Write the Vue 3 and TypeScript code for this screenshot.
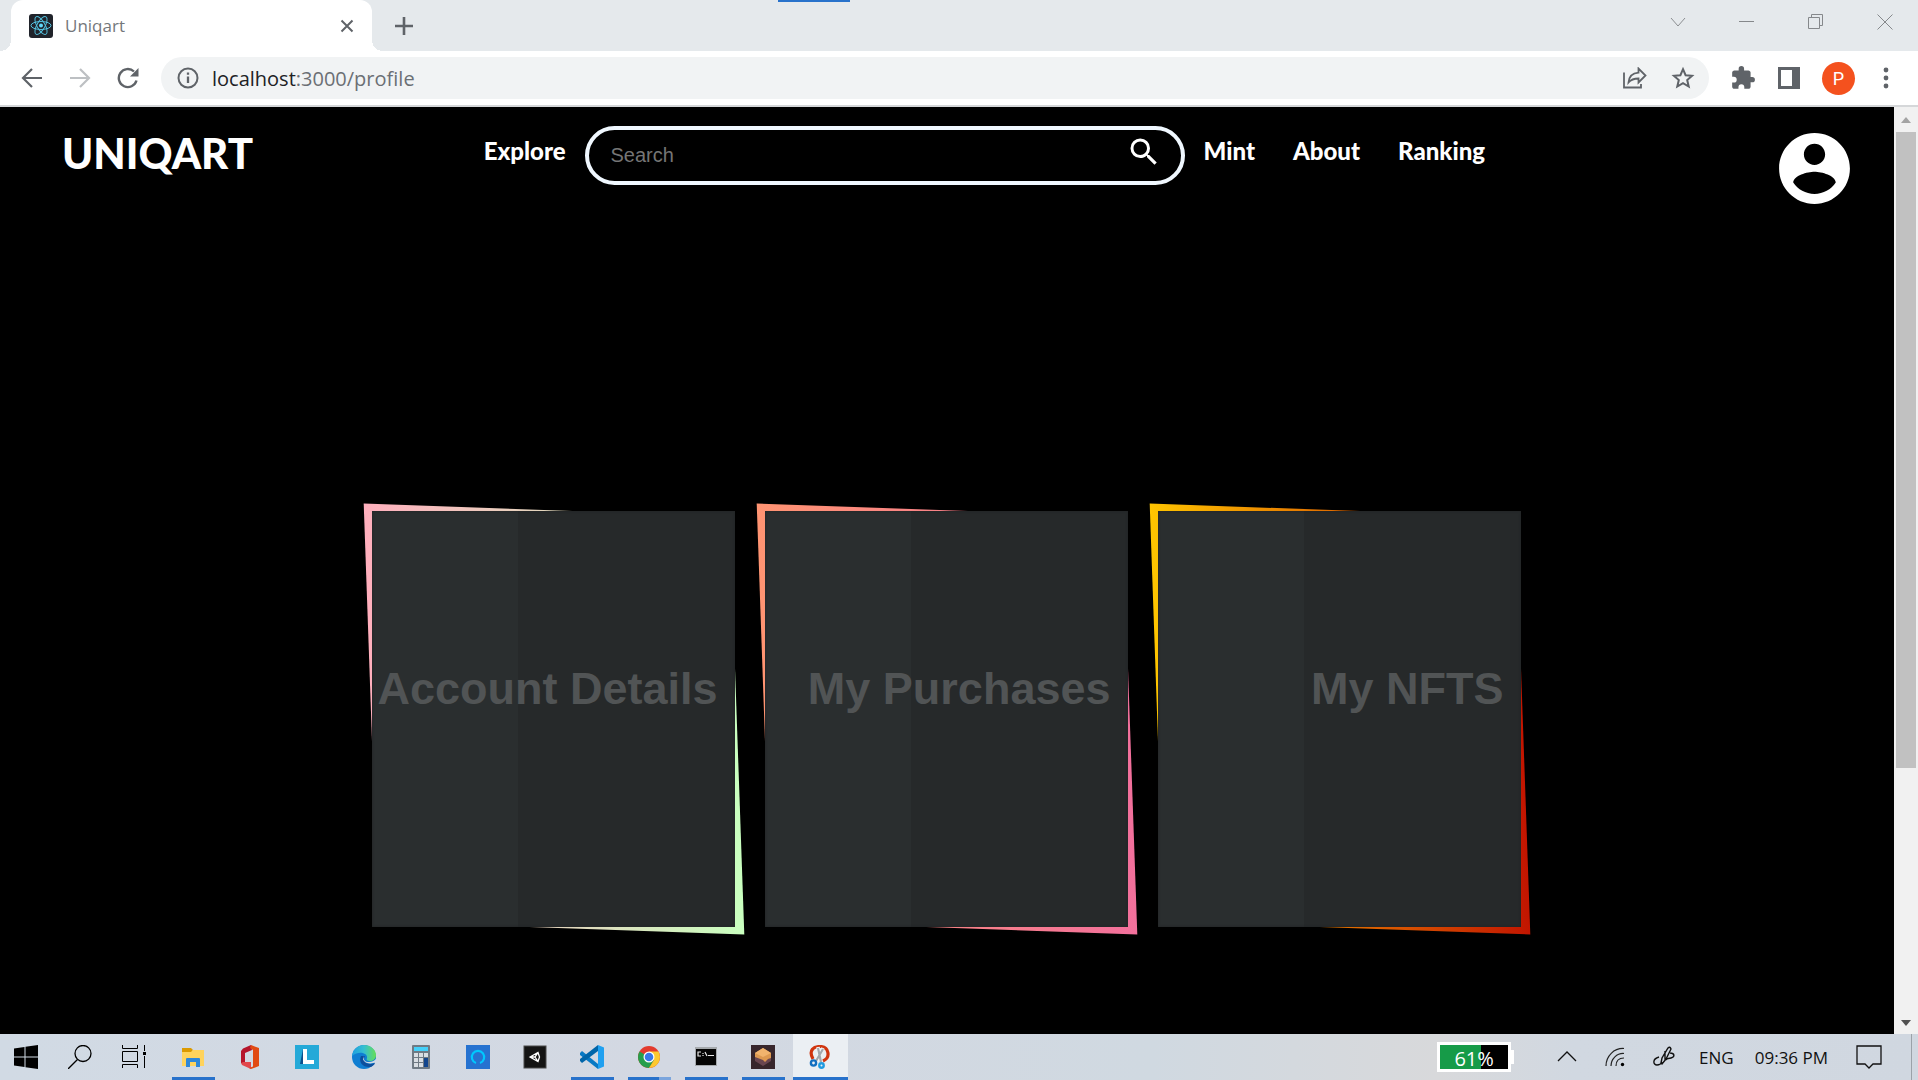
<script setup lang="ts">
interface Card {
  title: string
  from: string
  to: string
}

const cards: Card[] = [
  { title: 'Account Details', from: '#ffafbd', to: '#c9ffbf' },
  { title: 'My Purchases', from: '#ff9472', to: '#f2709c' },
  { title: 'My NFTS', from: '#ffc500', to: '#c21500' },
]

const linksAfterSearch: string[] = ['Mint', 'About', 'Ranking']
</script>

<template>
  <div class="screen">
    <div class="tabstrip">
      <span class="capture-bar"></span>
      <div class="tab">
        <svg class="favicon" viewBox="0 0 24 24" width="24" height="24">
          <rect width="24" height="24" rx="3" fill="#20232a" />
          <g fill="none" stroke="#53c1de" stroke-width="1">
            <ellipse cx="12" cy="11.500" rx="10" ry="4" />
            <ellipse cx="12" cy="11.500" rx="10" ry="4" transform="rotate(60 12 11.500)" />
            <ellipse cx="12" cy="11.500" rx="10" ry="4" transform="rotate(120 12 11.500)" />
          </g>
          <circle cx="12" cy="11.500" r="2" fill="#61dafb" />
        </svg>
        <span class="tab-title">Uniqart</span>
        <button class="bare" aria-label="Close tab">
          <svg width="14" height="14" viewBox="0 0 14 14"><path d="M1.500 1.500l11 11M12.500 1.500l-11 11" stroke="#5f6368" stroke-width="2" /></svg>
        </button>
      </div>
      <button class="bare new-tab" aria-label="New tab">
        <svg width="18" height="18" viewBox="0 0 18 18"><path d="M9 0v18M0 9h18" stroke="#5f6368" stroke-width="2.600" /></svg>
      </button>
      <div class="window-buttons">
        <button class="bare" aria-label="Search tabs">
          <svg width="16" height="16" viewBox="0 0 16 16"><path d="M1 4l7 8 7-8" fill="none" stroke="#8b8e91" /></svg>
        </button>
        <button class="bare" aria-label="Minimize">
          <svg width="16" height="16" viewBox="0 0 16 16"><path d="M0 7.500h15" stroke="#85888b" /></svg>
        </button>
        <button class="bare" aria-label="Restore">
          <svg width="16" height="16" viewBox="0 0 16 16"><path d="M.5 3.500h11v11H.5zM3.500 3.500v-3h11v11h-3" fill="none" stroke="#85888b" /></svg>
        </button>
        <button class="bare" aria-label="Close">
          <svg width="16" height="16" viewBox="0 0 16 16"><path d="M.5.5l15 15M15.500.5l-15 15" stroke="#85888b" /></svg>
        </button>
      </div>
    </div>

    <div class="toolbar">
      <div class="history">
        <button class="bare" aria-label="Back">
          <svg width="22" height="22" viewBox="0 0 22 22"><path d="M21 11H2M11 2l-9 9 9 9" fill="none" stroke="#5f6368" stroke-width="2.200" /></svg>
        </button>
        <button class="bare" aria-label="Forward">
          <svg width="22" height="22" viewBox="0 0 22 22"><path d="M1 11h19M11 2l9 9-9 9" fill="none" stroke="#bdc0c3" stroke-width="2.200" /></svg>
        </button>
        <button class="bare" aria-label="Reload">
          <svg width="22" height="22" viewBox="0 0 22 22"><path d="M19.500 13.500A9 9 0 1 1 17 4.500" fill="none" stroke="#5f6368" stroke-width="2.400" /><path d="M21.500 1v8.500H13z" fill="#5f6368" /></svg>
        </button>
      </div>
      <div class="address">
        <svg width="22" height="22" viewBox="0 0 22 22"><circle cx="11" cy="11" r="9.500" fill="none" stroke="#5f6368" stroke-width="2" /><path d="M11 9.500v6.500M11 5.500v2.300" stroke="#5f6368" stroke-width="2.300" /></svg>
        <span class="url"><span class="host">localhost</span>:3000/profile</span>
        <button class="bare share" aria-label="Share">
          <svg width="24" height="22" viewBox="0 0 24 22"><path d="M1 5.500v15h17V17" fill="none" stroke="#5f6368" stroke-width="1.800" /><path d="M5.500 15.500C6 9.500 10 6 15.500 5.600V1.500l7 7-7 7v-4c-4.500 0-7.500 1-10 4z" fill="none" stroke="#5f6368" stroke-width="1.800" /></svg>
        </button>
        <button class="bare" aria-label="Bookmark this page">
          <svg width="24" height="24" viewBox="0 0 24 24"><path d="M12 3.200l2.600 6 6.500.6-4.900 4.300 1.500 6.400-5.700-3.400-5.700 3.400 1.500-6.400-4.900-4.300 6.500-.6z" fill="none" stroke="#5f6368" stroke-width="2" /></svg>
        </button>
      </div>
      <div class="extensions">
        <button class="bare" aria-label="Extensions">
          <svg width="26" height="26" viewBox="0 0 24 24"><path fill="#5f6368" d="M20.500 11H19V7c0-1.100-.9-2-2-2h-4V3.500a2.500 2.500 0 0 0-5 0V5H4c-1.100 0-2 .9-2 2v3.800h1.500a2.700 2.700 0 0 1 0 5.400H2V20c0 1.100.9 2 2 2h3.800v-1.500a2.700 2.700 0 0 1 5.400 0V22H17c1.100 0 2-.9 2-2v-4h1.500a2.500 2.500 0 0 0 0-5z" /></svg>
        </button>
        <button class="bare" aria-label="Side panel">
          <svg width="22" height="22" viewBox="0 0 22 22"><path fill="#5f6368" fill-rule="evenodd" d="M0 0h22v22H0zM3 3v16h11V3z" /></svg>
        </button>
        <button class="bare avatar">P</button>
        <button class="bare" aria-label="Menu">
          <svg width="6" height="22" viewBox="0 0 6 22"><g fill="#5f6368"><circle cx="3" cy="3" r="2.400" /><circle cx="3" cy="11" r="2.400" /><circle cx="3" cy="19" r="2.400" /></g></svg>
        </button>
      </div>
    </div>

    <div class="viewport">
      <div class="page">
        <header class="site-header">
          <a class="logo" href="#">UNIQART</a>
          <nav class="nav">
            <a href="#">Explore</a>
            <form class="search" @submit.prevent>
              <input type="search" placeholder="Search" aria-label="Search" />
              <button class="bare" aria-label="Submit search">
                <svg width="36" height="36" viewBox="0 0 24 24"><path fill="#fff" d="M15.500 14h-.79l-.28-.27A6.471 6.471 0 0 0 16 9.500 6.500 6.500 0 1 0 9.500 16c1.610 0 3.090-.59 4.230-1.570l.27.28v.79l5 4.990L20.490 19l-4.990-5zm-6 0C7.010 14 5 11.990 5 9.500S7.010 5 9.500 5 14 7.010 14 9.500 11.990 14 9.500 14z" /></svg>
              </button>
            </form>
            <a v-for="link in linksAfterSearch" :key="link" href="#">{{ link }}</a>
          </nav>
          <button class="bare account" aria-label="Account">
            <svg width="85" height="85" viewBox="0 0 24 24"><path fill="#fff" d="M12 2C6.480 2 2 6.480 2 12s4.480 10 10 10 10-4.480 10-10S17.520 2 12 2zm0 3c1.660 0 3 1.340 3 3s-1.340 3-3 3-3-1.340-3-3 1.340-3 3-3zm0 14.200c-2.500 0-4.710-1.280-6-3.220.03-1.990 4-3.080 6-3.080 1.990 0 5.970 1.090 6 3.080-1.290 1.940-3.500 3.220-6 3.220z" /></svg>
          </button>
        </header>
        <main class="cards">
          <a
            v-for="card in cards"
            :key="card.title"
            class="card"
            href="#"
            :style="{ '--from': card.from, '--to': card.to }"
          >
            <span class="panel"><span class="card-title">{{ card.title }}</span></span>
          </a>
        </main>
      </div>
      <div class="scrollbar">
        <svg width="24" height="25" viewBox="0 0 24 25"><path d="M7 16l5-6 5 6z" fill="#a3a3a3" /></svg>
        <div class="track"><div class="thumb"></div></div>
        <svg width="24" height="25" viewBox="0 0 24 25"><path d="M7 11l5 6 5-6z" fill="#505050" /></svg>
      </div>
    </div>

    <footer class="taskbar">
      <div class="system">
        <button class="bare" aria-label="Start">
          <svg width="24" height="24" viewBox="0 0 24 24"><path d="M0 3.500L10.500 2v9.500H0zM11.500 1.800L24 0v11.500H11.500zM0 12.500h10.500V22L0 20.500zM11.500 12.500H24V24l-12.500-1.800z" /></svg>
        </button>
        <button class="bare" aria-label="Search">
          <svg width="24" height="24" viewBox="0 0 24 24"><g fill="none" stroke="#000" stroke-width="1.300"><circle cx="15" cy="8.500" r="8" /><path d="M9.500 14.500L0 24" /></g></svg>
        </button>
        <button class="bare" aria-label="Task view">
          <svg width="24" height="24" viewBox="0 0 24 24"><path d="M.5 0v3.500h15V0M.5 6.500h15v10H.5zM.5 23v-3.500h15V23M22.500 0v6M22.500 11v12" fill="none" stroke="#000" /><path d="M21 7h3v3h-3z" /></svg>
        </button>
      </div>
      <div class="apps">
        <button class="bare app open" aria-label="File Explorer">
          <svg width="24" height="24" viewBox="0 0 24 24"><path d="M1 3h9l2 2-2 3H1z" fill="#dc9a00" /><path d="M1 7h9l2-2h11v16H1z" fill="#ffd35c" /><path d="M5 22v-8q0-1 1-1h12q1 0 1 1v8h-4v-5H9v5z" fill="#2f87d8" /></svg>
        </button>
        <button class="bare app" aria-label="Office">
          <svg width="24" height="24" viewBox="0 0 24 24"><path d="M13 0L5 3.500 3 6v12l4 .5V8l7-3z" fill="#b5152b" /><path d="M3 18l2-1h8v7L4 20z" fill="#e2474c" /><path d="M13 0l8 3v18l-8 3-2-1 4-1.500V5l-3-2z" fill="#e14a12" /></svg>
        </button>
        <button class="bare app" aria-label="Lively">
          <svg width="24" height="24" viewBox="0 0 24 24"><path d="M0 0h24v24H0z" fill="#24a9d8" /><path d="M8 4L5 19h12l1-2h-8z" fill="#0c4f8c" /><path d="M8 4h4v11h7v4H8z" fill="#fff" /></svg>
        </button>
        <button class="bare app" aria-label="Edge">
          <svg width="24" height="24" viewBox="0 0 24 24"><defs><linearGradient id="edgeTop" x1="0" x2="1"><stop offset="0" stop-color="#1d9fe0" /><stop offset=".5" stop-color="#36bfd0" /><stop offset="1" stop-color="#66df55" /></linearGradient></defs><circle cx="12" cy="12" r="12" fill="#0f7ed2" /><path d="M0 11C1 4 6 0 12 0c7 0 12 5 12 10 0 4-3 6-6 6-3 0-4-1-3-3 1-5-8-8-15-2z" fill="url(#edgeTop)" /><path d="M9 11c-3 6 2 12 10 11 2-1 4-3 4-4-5 2-10 1-11-3-.5-2 1-4 1-4z" fill="#0c4f9d" /><path d="M12 11c-1 4 1 6 5 6 3 0 5-1 7-3v3c-6 3-12 1-13-3z" fill="#d3dae4" /></svg>
        </button>
        <button class="bare app" aria-label="Calculator">
          <svg width="24" height="24" viewBox="0 0 24 24"><rect x="3" width="18" height="24" rx="1" fill="#6f7a84" /><path d="M5 2h14v4H5z" fill="#45d0fa" /><path d="M5 8h4v4H5zM10 8h4v4h-4zM15 8h4v4h-4zM5 13h4v4H5zM10 13h4v4h-4zM5 18h4v4H5zM10 18h4v4h-4z" fill="#d9dee3" /><path d="M15 13h4v9h-4z" fill="#12458d" /></svg>
        </button>
        <button class="bare app" aria-label="Alexa">
          <svg width="24" height="24" viewBox="0 0 24 24"><path d="M0 0h24v24H0z" fill="#2672d0" /><path d="M10 18a6.200 6.200 0 1 1 4 0" fill="none" stroke="#00c8ff" stroke-width="2.200" /></svg>
        </button>
        <button class="bare app" aria-label="Unity">
          <svg width="24" height="24" viewBox="0 0 24 24"><rect x="1" y="1" width="22" height="22" fill="#141414" stroke="#4a4a4a" /><path d="M7 12l8-4.500 1.500 4.500-1.500 4.500zM7 12h5l3-4.500M12 12l3 4.500" fill="none" stroke="#fff" stroke-width="1.300" /></svg>
        </button>
        <button class="bare app open" aria-label="Visual Studio Code">
          <svg width="24" height="24" viewBox="0 0 24 24"><path d="M0 8l2-2 16 13v5L0 10z" fill="#0879c4" /><path d="M0 16l2 2L18 6V0L0 14z" fill="#0065a9" /><path d="M18 0l6 2.500v19L18 24z" fill="#20a0f0" /></svg>
        </button>
        <button class="bare app open stacked" aria-label="Chrome">
          <svg width="24" height="24" viewBox="0 0 24 24"><circle cx="12" cy="12" r="11" fill="#e33b2e" /><path d="M12 12L2.500 6.500A11 11 0 0 0 12 23l5-8z" fill="#269f4c" /><path d="M12 12l5 3-5 8A11 11 0 0 0 21.500 6.500H12z" fill="#fdc92f" /><circle cx="12" cy="12" r="5.500" fill="#fff" /><circle cx="12" cy="12" r="4.300" fill="#3a78e8" /></svg>
        </button>
        <button class="bare app open" aria-label="Command Prompt">
          <svg width="24" height="24" viewBox="0 0 24 24"><path d="M1 2h22v19H1z" fill="#a5a9ad" /><path d="M2 4h20v16H2z" fill="#050505" /><path d="M7 7H4v4h3M9 8v1M9 10v1M11 7l2 4M14 10.500h6" fill="none" stroke="#e8e8e8" stroke-width="1.200" /></svg>
        </button>
        <button class="bare app open" aria-label="Ganache">
          <svg width="24" height="24" viewBox="0 0 24 24"><path d="M0 0h24v24H0z" fill="#38262c" /><path d="M4 9l8 4 8-4v7l-8 5-8-5z" fill="#6a4650" /><path d="M4 8l8-5 8 5v5l-3 1-3 3-2-2-8-3z" fill="#dd9850" /><path d="M4 8l8-5 8 5-8 4z" fill="#f1b36d" /></svg>
        </button>
        <button class="bare app open active" aria-label="Snipping Tool">
          <svg width="24" height="24" viewBox="0 0 24 24"><path d="M5 14C0 5 6 1.500 12 1.500c9 0 11 11 3 14.500" fill="none" stroke="#d0350f" stroke-width="3.200" /><path d="M10 2l2 14M15 3l-7 13" stroke="#f5f6f7" stroke-width="3.500" /><path d="M10 3l3 14M15 4L8 16" stroke="#a2a8ad" stroke-width="2.200" /><g fill="none" stroke="#136fc0" stroke-width="2.400"><circle cx="5.500" cy="18" r="2.600" /><circle cx="13.500" cy="20.500" r="2.200" stroke="#1f9ae0" /></g></svg>
        </button>
      </div>
      <div class="tray">
        <div class="battery"><span>61%</span></div>
        <button class="bare" aria-label="Show hidden icons">
          <svg width="20" height="20" viewBox="0 0 20 20"><path d="M1 14l9-9 9 9" fill="none" stroke="#111" stroke-width="1.300" /></svg>
        </button>
        <button class="bare" aria-label="Network">
          <svg width="20" height="20" viewBox="0 0 20 20"><g fill="none" stroke="#222" stroke-width="1.200"><path d="M1 19C1 9 9 1 19 1.500M6 19C6 12 12 6 19 6.500M11 19c0-5 3-8 8-8" /></g><circle cx="17.500" cy="17.500" r="1.700" /></svg>
        </button>
        <button class="bare" aria-label="Pen">
          <svg width="22" height="22" viewBox="0 0 22 22"><path d="M8 17l1-5 6-10q2-2 3 1l-5 10-4 5zM12 5v10M6 11c-7 2-6 8-2 8 3 0 4-1 5-3M17 7c5 0 5 4 1 5-3 1-4 0-5 2" fill="none" stroke="#111" stroke-width="1.400" /></svg>
        </button>
        <div class="locale">
          <span>ENG</span>
          <time>09:36 PM</time>
        </div>
        <button class="bare" aria-label="Notifications">
          <svg width="26" height="26" viewBox="0 0 26 26"><path d="M1 2h24v18h-8l-4 4-4-4H1z" fill="none" stroke="#111" stroke-width="1.300" /></svg>
        </button>
      </div>
      <div class="peek"></div>
    </footer>
  </div>
</template>

<style>
body {
  margin: 0;
  background: #000;
}
</style>

<style scoped>
.screen {
  display: flex;
  flex-direction: column;
  min-height: 100vh;
  font-family: 'Open Sans', 'Noto Sans', sans-serif;
}

svg {
  display: block;
  flex: none;
}

a {
  color: inherit;
  text-decoration: none;
}

.bare {
  display: flex;
  align-items: center;
  justify-content: center;
  margin: 0;
  padding: 0;
  border: 0;
  background: none;
}

/* Browser chrome */
.tabstrip {
  position: relative;
  display: flex;
  height: 51px;
  background: #e5e9ec;
}

.capture-bar {
  position: absolute;
  top: 0;
  left: 778px;
  width: 72px;
  height: 2px;
  background: #2872cb;
}

.tab {
  position: relative;
  display: flex;
  align-items: center;
  box-sizing: border-box;
  width: 361px;
  margin-left: 11px;
  padding: 0 18px;
  border-radius: 12px 12px 0 0;
  background: #fff;
}

.tab::before,
.tab::after {
  content: '';
  position: absolute;
  bottom: 0;
  width: 11px;
  height: 11px;
}

.tab::before {
  right: 100%;
  background: radial-gradient(circle at 0 0, #e5e9ec 11px, #fff 11px);
}

.tab::after {
  left: 100%;
  background: radial-gradient(circle at 100% 0, #e5e9ec 11px, #fff 11px);
}

.tab-title {
  flex: 1;
  margin-left: 12px;
  font-size: 17px;
  color: #74777b;
}

.new-tab {
  margin-left: 23px;
}

.window-buttons {
  display: flex;
  gap: 53px;
  height: 43px;
  margin-left: auto;
  padding-right: 25px;
}

.toolbar {
  display: flex;
  align-items: center;
  height: 54px;
  border-bottom: 2px solid #d5d7d9;
  background: #fff;
}

.history {
  display: flex;
  gap: 26px;
  padding: 0 22px 0 21px;
}

.address {
  display: flex;
  flex: 1;
  align-items: center;
  height: 42px;
  padding: 0 14px 0 16px;
  border-radius: 21px;
  background: #f1f3f4;
}

.url {
  flex: 1;
  margin-left: 13px;
  font-size: 20px;
  color: #6b6f74;
}

.host {
  color: #202124;
}

.share {
  margin-right: 24px;
}

.extensions {
  display: flex;
  align-items: center;
  gap: 22px;
  padding: 0 29px 0 21px;
}

.avatar {
  width: 33px;
  height: 33px;
  border-radius: 50%;
  background: #f4511e;
  color: #fff;
  font-family: Roboto, sans-serif;
  font-size: 18px;
}

.extensions .avatar + .bare {
  margin-left: 6px;
}

/* Web page */
.viewport {
  display: flex;
  flex: 1;
  background: #000;
}

.page {
  flex: 1;
}

.site-header {
  display: flex;
  align-items: flex-start;
  padding: 19px 37px 0 62px;
  color: #fff;
  font-family: Lato, sans-serif;
  font-weight: 900;
}

.logo {
  margin-right: auto;
  font-size: 42px;
  line-height: 54px;
}

.nav {
  display: flex;
  margin-right: 287px;
  gap: 38px;
  font-size: 24px;
  line-height: 50px;
}

.search {
  display: flex;
  align-items: flex-start;
  box-sizing: border-box;
  width: 600px;
  height: 59px;
  margin: 0 -19px;
  padding-right: 19px;
  border: 4px solid #f0f8ff;
  border-radius: 30px;
}

.search input {
  flex: 1;
  min-width: 0;
  height: 51px;
  padding: 0 22px;
  border: 0;
  outline: 0;
  background: none;
  color: #fff;
  font: 20px 'Liberation Sans', Arial, sans-serif;
}

.search input::placeholder {
  color: #757575;
}

.search .bare {
  margin-top: 4px;
}

.cards {
  display: flex;
  justify-content: center;
  gap: 30px;
  padding: 300px 2px 107px 0;
}

.card {
  position: relative;
  width: 363px;
  height: 416px;
}

.card::before {
  content: '';
  position: absolute;
  inset: -1px -2px -1px -1px;
  background: linear-gradient(to right, var(--from), var(--to));
  transform: skew(2deg, 2deg);
}

.panel {
  position: relative;
  display: flex;
  align-items: center;
  justify-content: flex-end;
  height: 100%;
  background: linear-gradient(to right, #2a2e2f 146px, #26292a 146px);
  box-shadow: inset 0 0 3px #202324;
}

.card-title {
  margin: 0 17px 60px 0;
  color: #515455;
  font: bold 45px/52px 'Liberation Sans', Arial, sans-serif;
  white-space: nowrap;
}

.scrollbar {
  display: flex;
  flex-direction: column;
  width: 24px;
  background: #f1f1f1;
}

.track {
  flex: 1;
  padding: 0 2px;
}

.thumb {
  height: 72.5%;
  background: #c1c1c1;
}

/* Desktop taskbar */
.taskbar {
  display: flex;
  height: 46px;
  background: linear-gradient(to right, #d1dae4, #d3d8e2 35%, #d0d9e1 60%, #d8d9db 75%, #d1d8e1 82%, #d0d7e0);
}

.system,
.apps {
  display: flex;
}

.system {
  padding-right: 3px;
}

.system .bare {
  width: 54px;
  padding-right: 2px;
}

.app {
  position: relative;
  width: 57px;
  padding-right: 1px;
}

.open::after {
  content: '';
  position: absolute;
  right: 7px;
  bottom: 0;
  left: 7px;
  height: 3px;
  background: #2872cb;
}

.stacked::after {
  background: linear-gradient(to right, #2872cb 72%, #7ba5dd 72%);
}

.active {
  background: linear-gradient(#ebeff3, #ebeff3) center / 55px 100% no-repeat;
}

.active::after {
  right: 1px;
  left: 1px;
}

.tray {
  display: flex;
  align-items: center;
  margin-left: auto;
  padding-right: 29px;
  gap: 28px;
}

.battery {
  position: relative;
  box-sizing: border-box;
  width: 74px;
  height: 30px;
  margin-right: 18px;
  border: 3px solid #fff;
  background: linear-gradient(to right, #169b48 60%, #000 60%);
  color: #fff;
  font-size: 20px;
  line-height: 27px;
  text-align: center;
}

.battery::after {
  content: '';
  position: absolute;
  top: 5px;
  left: 71px;
  width: 3px;
  height: 14px;
  background: #fff;
}

.locale {
  display: flex;
  gap: 21px;
  margin-left: -4px;
  color: #111;
  font-size: 17px;
}

.peek {
  width: 6px;
  border-left: 1px solid #9ba2a9;
}
</style>
